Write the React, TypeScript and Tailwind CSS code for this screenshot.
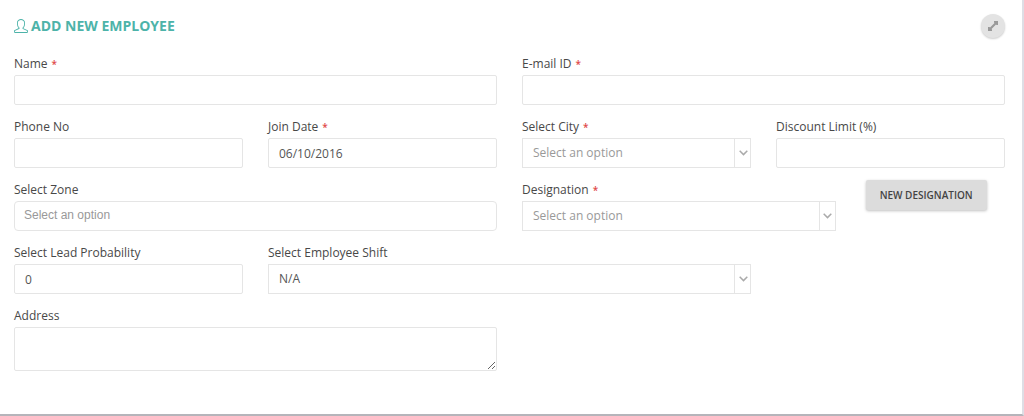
import { useState, type ReactNode } from 'react';
import { SlUser } from 'react-icons/sl';

const INPUT =
  'block h-[30px] w-full rounded-xs border border-[#e5e5e5] bg-white px-2.5 text-xs text-[#555] outline-none focus:border-[#b5b5b5]';

interface FieldProps {
  id: string;
  label: string;
  required?: boolean;
  className?: string;
  children: ReactNode;
}

function Field({ id, label, required, className = '', children }: FieldProps) {
  return (
    <div className={className}>
      <label htmlFor={id} className="mb-px block text-xs leading-5 text-[#484848]">
        {label}
        {required && <span className="ml-1 text-[10px] leading-none font-semibold text-[#e04848]">*</span>}
      </label>
      {children}
    </div>
  );
}

interface SelectBoxProps {
  id: string;
  options: string[];
  placeholder?: boolean;
}

function SelectBox({ id, options, placeholder }: SelectBoxProps) {
  return (
    <div className="relative">
      <select
        id={id}
        className={[
          'block h-[30px] w-full appearance-none border border-[#e5e5e5] bg-white pl-2.5 pr-5 text-xs outline-none focus:border-[#b5b5b5]',
          placeholder ? 'text-[#999]' : 'text-[#555]',
        ].join(' ')}
      >
        {options.map((o) => (
          <option key={o}>{o}</option>
        ))}
      </select>
      <span className="pointer-events-none absolute inset-y-0 right-0 flex w-[17px] items-center justify-center border-l border-[#e5e5e5]">
        <svg width="9" height="6" viewBox="0 0 9 6" fill="none" stroke="#aaa" strokeWidth="1.5">
          <path d="M0.7 0.8 4.5 4.6 8.3 0.8" />
        </svg>
      </span>
    </div>
  );
}

export default function App() {
  const [joinDate, setJoinDate] = useState('06/10/2016');
  const [probability, setProbability] = useState('0');

  return (
    <main className="border-r-2 border-b-2 border-r-[#dedee5] border-b-[#b5b4ba] bg-white pt-3.5 pr-[17px] pb-[43px] pl-3.5 font-['Open_Sans',sans-serif]">
      <header className="mb-4 flex h-6 items-center justify-between">
        <h1 className="flex items-center gap-[3px] text-sm font-bold text-[#4db3a9]">
          <SlUser className="size-3.5" />
          ADD NEW EMPLOYEE
        </h1>
        <button
          type="button"
          aria-label="Toggle fullscreen"
          className="flex size-6 items-center justify-center rounded-full bg-[#e3e3e3] shadow-[0_1px_2px_rgba(0,0,0,0.2)]"
        >
          <svg width="12" height="12" viewBox="0 0 12 12" fill="#999">
            <path d="M7 1h4v4H9.5L9 4.5 4.5 9l.5.5V11H1V7h1.5l.5.5L7.5 3 7 2.5z" />
          </svg>
        </button>
      </header>

      <form className="grid grid-cols-4 gap-x-[25px] gap-y-3" onSubmit={(e) => e.preventDefault()}>
        <Field id="name" label="Name" required className="col-span-2">
          <input id="name" type="text" className={INPUT} />
        </Field>
        <Field id="email" label="E-mail ID" required className="col-span-2">
          <input id="email" type="email" className={INPUT} />
        </Field>

        <Field id="phone" label="Phone No">
          <input id="phone" type="text" className={INPUT} />
        </Field>
        <Field id="join-date" label="Join Date" required>
          <input
            id="join-date"
            type="text"
            value={joinDate}
            onChange={(e) => setJoinDate(e.target.value)}
            className={INPUT}
          />
        </Field>
        <Field id="city" label="Select City" required>
          <SelectBox id="city" options={['Select an option']} placeholder />
        </Field>
        <Field id="discount" label="Discount Limit (%)">
          <input id="discount" type="text" className={INPUT} />
        </Field>

        <Field id="zone" label="Select Zone" className="col-span-2">
          <input
            id="zone"
            type="text"
            placeholder="Select an option"
            className="block h-[30px] w-full rounded-sm border border-[#e5e5e5] bg-white px-[9px] pb-0.5 font-['Liberation_Sans',sans-serif] text-xs text-[#555] outline-none placeholder:text-[#999] focus:border-[#b5b5b5]"
          />
        </Field>
        <div className="col-span-2 grid grid-cols-12 gap-x-[25px]">
          <Field id="designation" label="Designation" required className="col-span-8">
            <SelectBox id="designation" options={['Select an option']} placeholder />
          </Field>
          <div className="col-span-4 pl-[5px]">
            <button
              type="button"
              className="h-[30px] rounded-xs bg-[#dcdcdc] px-3.5 text-[10px] font-semibold whitespace-nowrap text-[#444] shadow-[0_1px_3px_rgba(0,0,0,0.25)]"
            >
              NEW DESIGNATION
            </button>
          </div>
        </div>

        <Field id="probability" label="Select Lead Probability">
          <input
            id="probability"
            type="text"
            value={probability}
            onChange={(e) => setProbability(e.target.value)}
            className={INPUT}
          />
        </Field>
        <Field id="shift" label="Select Employee Shift" className="col-span-2">
          <SelectBox id="shift" options={['N/A']} />
        </Field>

        <Field id="address" label="Address" className="col-span-2 col-start-1">
          <textarea
            id="address"
            className="block h-11 w-full resize rounded-xs border border-[#e5e5e5] bg-white px-2.5 py-1 text-xs text-[#555] outline-none focus:border-[#b5b5b5]"
          />
        </Field>
      </form>
    </main>
  );
}
